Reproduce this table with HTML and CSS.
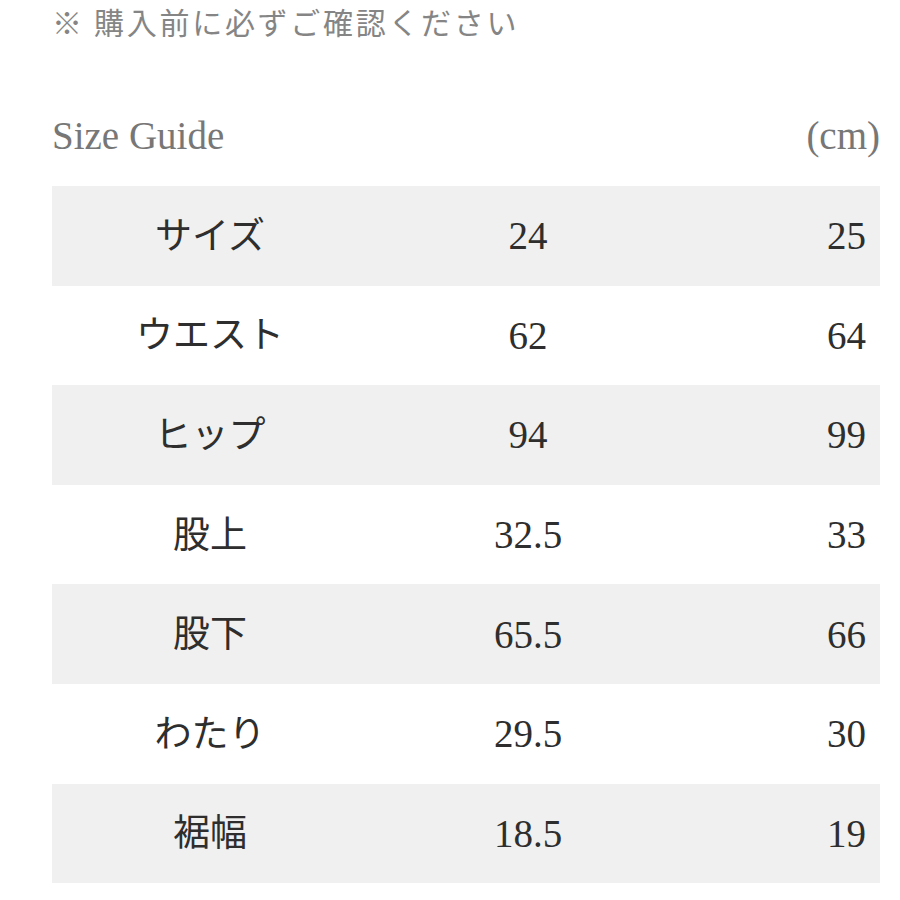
FILE: index.html
```html
<!DOCTYPE html>
<html lang="ja">
<head>
<meta charset="utf-8">
<link rel="stylesheet" href="styles.css">
</head>
<body>
<div class="page">
  <p class="note">※ 購入前に必ずご確認ください</p>
  <div class="header">
    <span class="title">Size Guide</span>
    <span class="unit">(cm)</span>
  </div>
  <div class="table">
    <div class="row shade"><div class="label">サイズ</div><div class="mid">24</div><div class="right">25</div></div>
    <div class="row"><div class="label">ウエスト</div><div class="mid">62</div><div class="right">64</div></div>
    <div class="row shade"><div class="label">ヒップ</div><div class="mid">94</div><div class="right">99</div></div>
    <div class="row"><div class="label">股上</div><div class="mid">32.5</div><div class="right">33</div></div>
    <div class="row shade"><div class="label">股下</div><div class="mid">65.5</div><div class="right">66</div></div>
    <div class="row"><div class="label">わたり</div><div class="mid">29.5</div><div class="right">30</div></div>
    <div class="row shade"><div class="label">裾幅</div><div class="mid">18.5</div><div class="right">19</div></div>
  </div>
</div>
</body>
</html>
```

FILE: styles.css
```css
html, body {
  margin: 0;
  padding: 0;
  background: #ffffff;
}
.page {
  padding: 2px 20px 0 52px;
}
.note {
  margin: 0;
  font-family: "Noto Sans CJK JP", "Noto Sans", sans-serif;
  font-size: 30px;
  line-height: 38px;
  letter-spacing: 2.7px;
  color: #858585;
}
.header {
  display: flex;
  justify-content: space-between;
  align-items: baseline;
  margin-top: 71px;
  font-family: "Liberation Serif", serif;
  font-size: 39px;
  line-height: 50px;
  color: #777777;
}
.table {
  margin-top: 25px;
}
.row {
  display: grid;
  grid-template-columns: 316px 320px 1fr;
  align-items: center;
  height: 99.6px;
}
.shade {
  background: #f0f0f0;
}
.label {
  text-align: center;
  font-family: "Noto Sans CJK JP", "Noto Sans", sans-serif;
  font-size: 37px;
  color: #2e2e2e;
  margin-top: -6px;
}
.mid, .right {
  font-family: "Liberation Serif", serif;
  font-size: 39px;
  color: #2e2e2e;
}
.mid {
  text-align: center;
}
.right {
  text-align: right;
  padding-right: 14px;
}
```
